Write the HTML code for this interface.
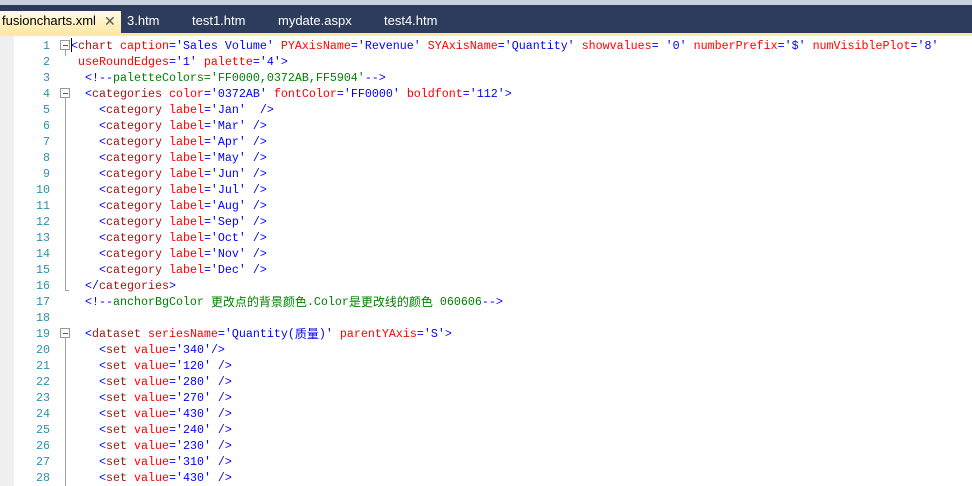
<!DOCTYPE html><html><head><meta charset="utf-8"><style>
body{margin:0;width:972px;height:486px;overflow:hidden;background:#fff;position:relative;font-family:"Liberation Sans",sans-serif}
#top{position:absolute;left:0;top:0;width:972px;height:5px;background:#c9d1de}
#bar{position:absolute;left:0;top:5px;width:972px;height:28px;background:#2d3c5c}
#line{position:absolute;left:0;top:33px;width:972px;height:3px;background:#fde8a4}
#act{position:absolute;left:0;top:11px;width:121px;height:22px;background:linear-gradient(#fffbe8,#fde8a4);}
.tab{position:absolute;top:13px;font-size:13px;color:#fff}
#gut{position:absolute;left:0;top:36px;width:14px;height:450px;background:#f0f0f0}
.ln{position:absolute;left:20px;width:30px;height:16px;line-height:16px;text-align:right;color:#2b91af;font:11.67px/16px "Liberation Mono",monospace}
.c{position:absolute;left:71px;height:16px;white-space:pre;font:11.67px/16px "Liberation Mono","Noto Sans CJK SC",monospace;color:#0000ff}
.t{color:#a31515}.a{color:#ff0000}.g{color:#008000}
.fb{position:absolute;left:60px;width:8px;height:8px;border:1px solid #999;background:#fff}
.fb:after{content:"";position:absolute;left:2px;top:4px;width:5px;height:1px;background:#555}
.vl{position:absolute;left:65px;width:1px;background:#a5a5a5}
.cj{font-family:"Noto Sans CJK SC",sans-serif;font-size:12px;line-height:16px;vertical-align:top}
</style></head><body>
<div id="top"></div><div id="bar"></div><div id="line"></div><div id="act"></div>
<div class="tab" style="left:2px;color:#000">fusioncharts.xml</div>
<div class="tab" style="left:104px;color:#555;font-size:14px">✕</div>
<div class="tab" style="left:127px">3.htm</div>
<div class="tab" style="left:192px">test1.htm</div>
<div class="tab" style="left:278px">mydate.aspx</div>
<div class="tab" style="left:384px">test4.htm</div>
<div id="gut"></div>
<div class="vl" style="top:50px;height:6px"></div>
<div class="vl" style="top:98px;height:192px"></div>
<div class="vl" style="top:338px;height:148px"></div>
<div class="fb" style="top:40px"></div><div class="fb" style="top:88px"></div><div class="fb" style="top:328px"></div>
<div style="position:absolute;left:65px;top:290px;width:4px;height:1px;background:#a5a5a5"></div>
<div style="position:absolute;left:71px;top:38px;width:1px;height:14px;background:#000"></div>
<div id="code"></div>
<script>
var L=[
'<<t>chart</t> <a>caption</a>=\'Sales Volume\' <a>PYAxisName</a>=\'Revenue\' <a>SYAxisName</a>=\'Quantity\' <a>showvalues</a>= \'0\' <a>numberPrefix</a>=\'$\' <a>numVisiblePlot</a>=\'8\'',
' <a>useRoundEdges</a>=\'1\' <a>palette</a>=\'4\'>',
'  &lt;!--<g>paletteColors=\'FF0000,0372AB,FF5904\'</g>--&gt;',
'  <<t>categories</t> <a>color</a>=\'0372AB\' <a>fontColor</a>=\'FF0000\' <a>boldfont</a>=\'112\'>'];
var m=['Jan\'  />','Mar\' />','Apr\' />','May\' />','Jun\' />','Jul\' />','Aug\' />','Sep\' />','Oct\' />','Nov\' />','Dec\' />'];
m.forEach(function(x){L.push('    <<t>category</t> <a>label</a>=\''+x)});
L.push('  </<t>categories</t>>');
L.push('  &lt;!--<g>anchorBgColor <span class="cj">更改点的背景颜色</span>.Color<span class="cj">是更改线的颜色</span> 060606</g>--&gt;');
L.push('');
L.push('  <<t>dataset</t> <a>seriesName</a>=\'Quantity(<span class="cj">质量</span>)\' <a>parentYAxis</a>=\'S\'>');
['340\'/>','120\' />','280\' />','270\' />','430\' />','240\' />','230\' />','310\' />','430\' />'].forEach(function(x){L.push('    <<t>set</t> <a>value</a>=\''+x)});
var h='';
L.forEach(function(s,i){
 s=s.replace(/<(\/?)<t>/g,'&lt;$1<t>').replace(/<(?=<a>)/g,'');
 s=s.replace(/<t>/g,'<span class="t">').replace(/<\/t>/g,'</span>').replace(/<a>/g,'<span class="a">').replace(/<\/a>/g,'</span>').replace(/<g>/g,'<span class="g">').replace(/<\/g>/g,'</span>');
 s=s.replace(/'>$/,"'&gt;").replace(/\/>$/,'/&gt;');
 var y=38+i*16;
 h+='<div class="ln" style="top:'+y+'px">'+(i+1)+'</div><div class="c" style="top:'+y+'px">'+s+'</div>';
});
document.getElementById('code').innerHTML=h;
</script>
</body></html>
